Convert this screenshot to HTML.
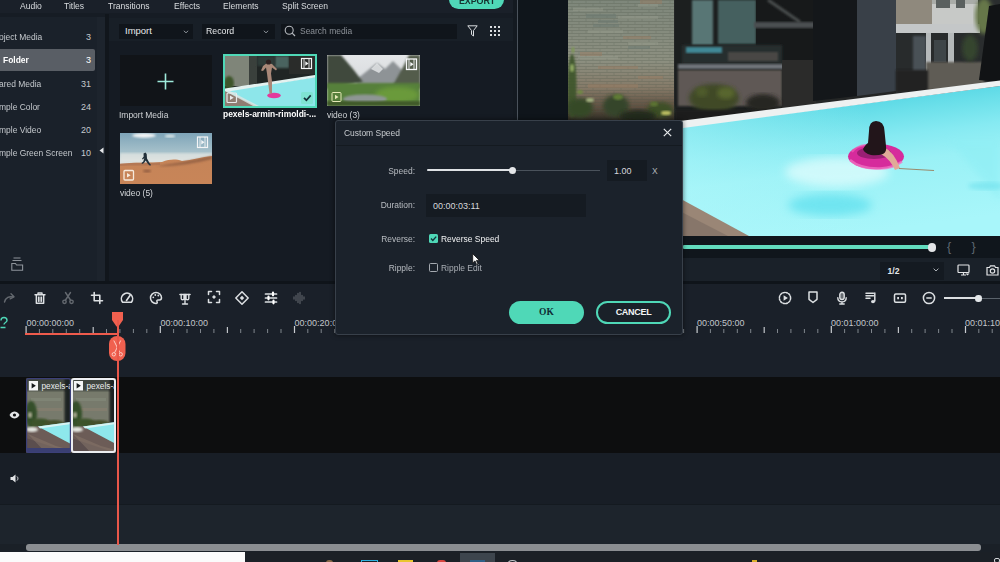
<!DOCTYPE html>
<html><head><meta charset="utf-8">
<style>
*{box-sizing:border-box;margin:0;padding:0}
html,body{width:1000px;height:562px;overflow:hidden;background:#1a2029;font-family:"Liberation Sans",sans-serif;color:#c9cdd1}
.a{position:absolute}
.t{position:absolute;white-space:nowrap;font-size:9px;line-height:10px;color:#c5c9cd}
.ic{position:absolute;overflow:visible}
.n{transform:scaleX(.94);transform-origin:0 50%}
.nr{transform:scaleX(.94);transform-origin:100% 50%}
.tab{font-size:9.5px!important;color:#d9dcdf!important;transform:scaleX(.9);transform-origin:0 50%;top:.5px!important}
</style></head><body>
<!-- ===== top tabs ===== -->
<div class="a" style="left:0;top:0;width:516px;height:13px;background:#1a2029"></div><div class="a" style="left:0;top:13px;width:516px;height:5px;background:#161c24"></div>
<div class="t tab" style="left:20px">Audio</div>
<div class="t tab" style="left:64px">Titles</div>
<div class="t tab" style="left:108px">Transitions</div>
<div class="t tab" style="left:174px">Effects</div>
<div class="t tab" style="left:223px">Elements</div>
<div class="t tab" style="left:282px">Split Screen</div>
<div class="a" style="left:449px;top:-10px;width:54.500px;height:19px;border-radius:10px;background:#4fd8b7"></div>
<div class="t n" style="left:459px;top:-4.500px;font-size:9.500px;font-weight:bold;color:#16322f;letter-spacing:-.1px">EXPORT</div>

<!-- ===== sidebar ===== -->
<div class="a" style="left:0;top:17px;width:105px;height:265px;background:#1a212a"></div><div class="a" style="left:97px;top:17px;width:7.500px;height:265px;background:#1d242d"></div>
<div class="a" style="left:0;top:49px;width:95px;height:22px;background:#595e65;border-radius:0 2px 2px 0"></div>
<div class="t n" style="left:-1.5px;top:32px">oject Media</div><div class="t" style="left:86px;top:32px">3</div>
<div class="t n" style="left:3px;top:55px;font-weight:bold;color:#fff">Folder</div><div class="t" style="left:86px;top:55px;color:#fff">3</div>
<div class="t n" style="left:-1.5px;top:78.5px">ared Media</div><div class="t" style="left:81px;top:78.5px">31</div>
<div class="t n" style="left:-1.5px;top:101.5px">mple Color</div><div class="t" style="left:81px;top:101.5px">24</div>
<div class="t n" style="left:-1.5px;top:124.5px">mple Video</div><div class="t" style="left:81px;top:124.5px">20</div>
<div class="t n" style="left:-1.5px;top:148px">mple Green Screen</div><div class="t" style="left:81px;top:148px">10</div>
<div class="a" style="left:104.500px;top:14px;width:4px;height:268px;background:#11161c"></div>

<!-- ===== media panel ===== -->
<div class="a" style="left:108.500px;top:18px;width:407.500px;height:23px;background:#181f27"></div><div class="a" style="left:108.500px;top:41px;width:407.500px;height:241px;background:#151b23"></div>
<div class="a" style="left:119px;top:23.5px;width:74px;height:15.5px;background:#10151b"></div>
<div class="t n" style="left:125px;top:26px;font-size:9.500px;color:#e6e8ea;transform:none">Import</div>
<div class="a" style="left:202px;top:23.5px;width:73px;height:15.5px;background:#10151b"></div>
<div class="t n" style="left:206px;top:26px;font-size:9.300px;color:#e6e8ea">Record</div>
<div class="a" style="left:281px;top:23.5px;width:175.500px;height:15.5px;background:#10151b"></div>
<div class="t n" style="left:300px;top:26px;color:#8b9097">Search media</div>

<div class="a" style="left:119.500px;top:55px;width:92.500px;height:51px;background:#111418"></div>
<div class="t n" style="left:119px;top:110px;color:#d0d3d6">Import Media</div>
<div class="t n" style="left:223px;top:109px;font-weight:bold;color:#fff">pexels-armin-rimoldi-...</div>
<div class="t n" style="left:327px;top:109.500px;color:#d5d8db">video (3)</div>
<div class="t n" style="left:120px;top:187.500px;color:#d5d8db">video (5)</div>

<!-- thumbs -->
<svg class="ic" style="left:157px;top:73px" width="17" height="17" viewBox="0 0 17 17"><path d="M8.500 .5v16M.5 8.500h16" stroke="#9feadb" stroke-width="1.600"/></svg>
<svg class="a" style="left:223px;top:54px" width="94" height="54" viewBox="0 0 94 54">
<rect width="94" height="54" fill="#4fd8b7"/>
<g transform="translate(2,2)"><svg width="90" height="50" viewBox="0 0 90 50">
<rect width="90" height="50" fill="#202524"/>
<rect x="0" y="0" width="24" height="30" fill="#7f8579"/>
<rect x="24" y="0" width="8" height="28" fill="#3a403c"/>
<rect x="50" y="0" width="14" height="12" fill="#48645f" filter="url(#b1)"/>
<rect x="32" y="0" width="18" height="10" fill="#2f3a38" filter="url(#b1)"/>
<rect x="64" y="0" width="26" height="18" fill="#2a2c2a"/>
<ellipse cx="4" cy="27" rx="5" ry="7" fill="#3e552c" filter="url(#b1)"/>
<polygon points="0,35 90,21 90,50 0,50" fill="#8de6ea"/>
<polygon points="0,32.500 90,19 90,21.500 0,36" fill="#e4f2f0"/>
<polygon points="0,35 31,50 0,50" fill="#8f7d72"/>
<polygon points="0,35 4,34.500 34,50 28,50" fill="#dfe6e4" opacity=".8"/>
<ellipse cx="49" cy="39.500" rx="6.800" ry="2.800" fill="#e43a9c"/>
<path d="M38 10l4-3 5 1 5 5-1 1.500-4-3-1 6 1 8 0 12h-2.500l-1.500-12-1-8-1-6-3 3.500-2-.5z" fill="#a98878"/>
<ellipse cx="43.500" cy="6" rx="2.600" ry="2.600" fill="#2c2020"/>
</svg></g>
<g fill="none" stroke="#f4f5f6" stroke-width="1.200"><rect x="78.500" y="4.500" width="10" height="10"/><path d="M81 4.500v10M86 4.500v10" stroke-width=".9"/></g><path d="M82.300 7.300v4.400l3.200-2.200z" fill="#f4f5f6"/>
<g fill="none" stroke="#e8eaeb" stroke-width="1.200"><rect x="4" y="39" width="9.500" height="9.500" rx="1"/></g><path d="M7 41.500v4.600l3.700-2.300z" fill="#e8eaeb"/>
<rect x="78" y="38" width="12" height="12" rx="1.500" fill="#7fe3d3"/><path d="M81 43.800l2.400 2.400 4.300-4.800" stroke="#14323a" stroke-width="1.700" fill="none"/>
</svg>
<svg class="a" style="left:327px;top:55px" width="93" height="51" viewBox="0 0 93 51">
<defs><linearGradient id="sky3" x1="0" y1="0" x2="0" y2="1"><stop offset="0" stop-color="#e4e6e8"/><stop offset="1" stop-color="#cfd3d6"/></linearGradient></defs>
<rect width="93" height="51" fill="url(#sky3)"/>
<polygon points="30,24 50,8 58,14 66,6 80,20 93,14 93,32 30,32" fill="#8e9396" filter="url(#b1)"/>
<polygon points="44,14 50,8 56,14 52,18" fill="#e6e8ea" opacity=".8"/>
<polygon points="0,0 14,0 26,14 36,27 0,34" fill="#3f4a3c" filter="url(#b1)"/>
<polygon points="93,0 82,0 76,12 66,30 93,34" fill="#535c4c" filter="url(#b1)"/>
<rect x="0" y="28" width="93" height="23" fill="#56803a" filter="url(#b1)"/>
<ellipse cx="70" cy="40" rx="22" ry="8" fill="#6a9a3a" filter="url(#b2)"/>
<ellipse cx="38" cy="44" rx="22" ry="4.500" fill="#8e9694" filter="url(#b1)"/>
<rect x="0" y="46" width="93" height="5" fill="#3f5a2c" filter="url(#b1)"/>
<g fill="none" stroke="#f8f9fa" stroke-width="1.300"><rect x="79.500" y="4" width="10" height="10.500"/><path d="M82 4v10.500M87 4v10.500" stroke-width=".9"/></g><path d="M83.300 7v4.400l3.200-2.200z" fill="#f8f9fa"/>
<g fill="none" stroke="#e6e9b8" stroke-width="1"><rect x="5" y="37.500" width="9" height="9" rx="1"/></g><path d="M8 39.800v4.400l3.500-2.200z" fill="#e6e9b8"/>
</svg>
<svg class="a" style="left:120px;top:133px" width="92" height="51" viewBox="0 0 92 51">
<defs><linearGradient id="sky5" x1="0" y1="0" x2="0" y2="1"><stop offset="0" stop-color="#7ea4b8"/><stop offset=".4" stop-color="#a9c3cc"/><stop offset=".6" stop-color="#dfe3e0"/><stop offset="1" stop-color="#e0dcd0"/></linearGradient>
<linearGradient id="sand" x1="0" y1="0" x2="0" y2="1"><stop offset="0" stop-color="#c58458"/><stop offset="1" stop-color="#c88558"/></linearGradient></defs>
<rect width="92" height="51" fill="url(#sky5)"/>
<ellipse cx="24" cy="2.500" rx="12" ry="2.200" fill="#f4f6f6" filter="url(#b1)"/>
<ellipse cx="50" cy="3" rx="5" ry="1.500" fill="#d8e4e6" filter="url(#b1)"/>
<rect x="0" y="20" width="92" height="9" fill="#e6e8e4" opacity=".7" filter="url(#b1)"/>
<path d="M0 31 C15 29 30 30 42 29 C50 26 56 26 62 28 C72 27 82 24 92 23 V51 H0z" fill="url(#sand)"/>
<path d="M36 33 C52 31 70 28 92 23 V26 C75 30 55 34 36 33z" fill="#8a5a40" opacity=".8" filter="url(#b1)"/>
<path d="M0 30.500 C12 29 25 30 40 29.500 L40 32 C25 33 12 32 0 33z" fill="#a97052" opacity=".6"/>
<path d="M23.500 20.500l2-1 1.200 1.500.3 4.500 2.500 4.500 1.500 2-1 .8-2-1.800-2.300-3.500-1.700 2.500-2 1-.5-1 1.800-1.500 1-3.500-1.500 1.500-.8-.7 1.700-2.200z" fill="#22303a"/>
<ellipse cx="27" cy="38" rx="4" ry="1.300" fill="#6a4030" opacity=".6" filter="url(#b1)"/>
<g fill="none" stroke="#f4f5f6" stroke-width="1.200"><rect x="77.500" y="4" width="10" height="10.500"/><path d="M80 4v10.500M85 4v10.500" stroke-width=".9"/></g><path d="M81.300 7v4.400l3.200-2.200z" fill="#f4f5f6"/>
<g fill="none" stroke="#f6eadc" stroke-width="1.300"><rect x="4" y="37.500" width="9.500" height="9.500" rx="1"/></g><path d="M7 40v4.600l3.700-2.300z" fill="#f6eadc"/>
</svg>
<!-- media toolbar icons -->
<svg class="ic" style="left:183px;top:29.500px" width="6" height="4" viewBox="0 0 6 4"><path d="M.8 .8L3 2.800 5.200 .8" stroke="#8a9097" stroke-width="1" fill="none"/></svg>
<svg class="ic" style="left:263px;top:29.500px" width="6" height="4" viewBox="0 0 6 4"><path d="M.8 .8L3 2.800 5.200 .8" stroke="#8a9097" stroke-width="1" fill="none"/></svg>
<svg class="ic" style="left:284px;top:25px" width="12" height="12" viewBox="0 0 12 12"><circle cx="5.200" cy="5.200" r="4" stroke="#b5b9be" stroke-width="1.100" fill="none"/><path d="M8.200 8.200L11 11" stroke="#b5b9be" stroke-width="1.200"/></svg>
<svg class="ic" style="left:467px;top:25px" width="11" height="12" viewBox="0 0 11 12"><path d="M.8 .8h9.400L6.500 5.500V11L4.500 9.500V5.500z" stroke="#d9dcdf" stroke-width="1" fill="none" stroke-linejoin="round"/></svg>
<svg class="ic" style="left:490px;top:26px" width="10" height="10" viewBox="0 0 10 10" fill="#d9dcdf"><rect x="0" y="0" width="2" height="2"/><rect x="4" y="0" width="2" height="2"/><rect x="8" y="0" width="2" height="2"/><rect x="0" y="4" width="2" height="2"/><rect x="4" y="4" width="2" height="2"/><rect x="8" y="4" width="2" height="2"/><rect x="0" y="8" width="2" height="2"/><rect x="4" y="8" width="2" height="2"/><rect x="8" y="8" width="2" height="2"/></svg>
<svg class="ic" style="left:98.500px;top:147px" width="5" height="7" viewBox="0 0 5 7"><path d="M4.500 .5v6L.5 3.500z" fill="#e6e8ea"/></svg>
<svg class="ic" style="left:11px;top:257px" width="13" height="14" viewBox="0 0 13 14"><path d="M.8 6.500h3.600l1.200 1.500h6v5.200H.8zM1.500 3.500h9M2.500 1h7" stroke="#8d939a" stroke-width="1.100" fill="none"/></svg>
<!-- panel divider & preview -->
<div class="a" style="left:513px;top:0;width:4px;height:282px;background:#141a21"></div><div class="a" style="left:516.500px;top:0;width:1.500px;height:282px;background:#4a525b"></div>
<div class="a" style="left:518px;top:0;width:50px;height:282px;background:#0f151b"></div>
<svg class="a" style="left:568px;top:0" width="432" height="236" viewBox="0 0 432 236">
<defs>
<linearGradient id="wall" x1="0" y1="0" x2="0" y2="1"><stop offset="0" stop-color="#7e877b"/><stop offset=".5" stop-color="#8c8f80"/><stop offset=".72" stop-color="#857a68"/><stop offset=".88" stop-color="#5e4f40"/><stop offset="1" stop-color="#2a2a22"/></linearGradient>
<linearGradient id="pool" gradientUnits="userSpaceOnUse" x1="266" y1="104" x2="283" y2="234"><stop offset="0" stop-color="#5ad8e5"/><stop offset=".12" stop-color="#6ce0ea"/><stop offset=".3" stop-color="#86eaf2"/><stop offset=".5" stop-color="#9af1f6"/><stop offset="1" stop-color="#a8f6fa"/></linearGradient><linearGradient id="pooll" gradientUnits="userSpaceOnUse" x1="100" y1="0" x2="300" y2="0"><stop offset="0" stop-color="#b2f8fb" stop-opacity=".6"/><stop offset="1" stop-color="#b2f8fb" stop-opacity="0"/></linearGradient>
<filter id="b2"><feGaussianBlur stdDeviation="2"/></filter>
<filter id="b3"><feGaussianBlur stdDeviation="3"/></filter>
<filter id="b4"><feGaussianBlur stdDeviation="5"/></filter>
<filter id="b1"><feGaussianBlur stdDeviation="0.8"/></filter>
<pattern id="brick" width="14" height="6" patternUnits="userSpaceOnUse"><rect width="14" height="6" fill="none"/><path d="M0 .5H14M0 3.500H14" stroke="#4e5648" stroke-width=".7"/><path d="M4 .5V3.500M11 3.500V6" stroke="#4e5648" stroke-width=".6"/></pattern>
<clipPath id="pv"><rect width="432" height="236"/></clipPath>
</defs>
<g clip-path="url(#pv)">
<rect width="432" height="236" fill="#242626"/>
<!-- mid background building -->
<rect x="107" y="0" width="140" height="122" fill="#1c1f1f"/>
<rect x="124" y="0" width="21" height="45" fill="#587674" filter="url(#b1)"/>
<rect x="150" y="0" width="38" height="44" fill="#45605e" filter="url(#b1)"/>
<rect x="188" y="0" width="60" height="60" fill="#17191a"/>
<path d="M200 0L232 22" stroke="#4a4e4e" stroke-width="3" filter="url(#b1)"/>
<rect x="186" y="22" width="62" height="6" fill="#4c5051" filter="url(#b1)"/>
<rect x="114" y="45" width="100" height="19" fill="#272d2e" filter="url(#b1)"/>
<rect x="118" y="47" width="36" height="6" fill="#3f8896" filter="url(#b1)"/>
<rect x="160" y="52" width="50" height="9" fill="#4a4644" filter="url(#b1)"/>
<path d="M110 64h104c4 0 6 2 5 5H110z" fill="#70757a" filter="url(#b1)"/>
<rect x="110" y="70" width="104" height="36" fill="#5e5954" filter="url(#b1)"/>
<rect x="214" y="60" width="34" height="48" fill="#2b2b2a"/>
<ellipse cx="146" cy="98" rx="25" ry="14" fill="#3f4927" filter="url(#b2)"/>
<ellipse cx="158" cy="93" rx="9" ry="6" fill="#59662f" filter="url(#b2)"/>
<ellipse cx="134" cy="92" rx="6" ry="5" fill="#4f5c2c" filter="url(#b2)"/>
<ellipse cx="195" cy="103" rx="17" ry="9" fill="#272624" filter="url(#b2)"/>
<rect x="107" y="110" width="140" height="14" fill="#1b1c1b" filter="url(#b1)"/>
<!-- brick wall -->
<rect x="0" y="0" width="106" height="122" fill="url(#wall)"/>
<rect x="0" y="0" width="106" height="112" fill="url(#brick)" opacity=".38"/>
<g fill="#9a9f90" opacity=".4"><rect x="5" y="8" width="30" height="3"/><rect x="50" y="16" width="40" height="3"/><rect x="20" y="30" width="35" height="3"/><rect x="60" y="42" width="30" height="3"/><rect x="10" y="56" width="40" height="3"/><rect x="70" y="4" width="20" height="3"/></g>
<g fill="#6c7a72" opacity=".5"><rect x="18" y="14" width="30" height="4"/><rect x="60" y="46" width="22" height="3"/><rect x="25" y="24" width="26" height="3"/><rect x="30" y="20" width="20" height="3"/></g>
<g fill="#9a7c62" opacity=".45"><rect x="55" y="36" width="28" height="3"/><rect x="12" y="52" width="22" height="4"/><rect x="30" y="66" width="40" height="3"/><rect x="70" y="76" width="25" height="3"/><rect x="20" y="84" width="50" height="4"/><rect x="72" y="0" width="22" height="4"/></g>
<ellipse cx="4" cy="86" rx="4.500" ry="32" fill="#3c552b" opacity=".9" filter="url(#b1)"/>
<ellipse cx="12" cy="108" rx="13" ry="10" fill="#364a28" filter="url(#b2)"/>
<ellipse cx="48" cy="106" rx="13" ry="11" fill="#34452a" filter="url(#b2)"/>
<ellipse cx="92" cy="110" rx="13" ry="8" fill="#3e4f27" filter="url(#b2)"/>
<ellipse cx="70" cy="116" rx="18" ry="6" fill="#232a1c" filter="url(#b2)"/>
<ellipse cx="4" cy="68" rx="2" ry="4" fill="#8fa862" filter="url(#b1)"/>
<ellipse cx="5" cy="50" rx="1.500" ry="3" fill="#7f9a58" filter="url(#b1)"/>
<ellipse cx="22" cy="100" rx="4" ry="2" fill="#a3b380" filter="url(#b1)"/>
<ellipse cx="12" cy="92" rx="3" ry="2" fill="#6f8a42" filter="url(#b1)"/>
<ellipse cx="98" cy="113" rx="5" ry="2.200" fill="#bcbd62" filter="url(#b1)"/>
<ellipse cx="50" cy="97" rx="5" ry="3" fill="#5f7a36" filter="url(#b1)"/>
<ellipse cx="86" cy="104" rx="4" ry="2.500" fill="#5c7333" filter="url(#b1)"/>
<!-- dark column -->
<polygon points="245,0 289,0 289,96 245,101" fill="#14171a"/>
<polygon points="289,0 328,0 328,91 289,96" fill="#394048"/>
<!-- right building -->
<rect x="328" y="0" width="104" height="95" fill="#2a2d2e"/>
<rect x="328" y="0" width="40" height="25" fill="#8f897d"/>
<rect x="364" y="3" width="46" height="22" fill="#c7c9c7"/>
<rect x="364" y="0" width="46" height="4" fill="#a9aca8"/>
<rect x="368" y="0" width="14" height="8" fill="#5a605f"/><rect x="388" y="0" width="9" height="8" fill="#5a605f"/>
<rect x="328" y="24" width="84" height="9" fill="#c4c7c8"/>
<rect x="328" y="33" width="84" height="50" fill="#282b2c"/>
<rect x="345" y="36" width="13" height="36" fill="#485157" filter="url(#b1)"/>
<rect x="358" y="33" width="5" height="38" fill="#b5b9ba"/><rect x="380" y="33" width="6" height="32" fill="#b5b9ba"/>
<rect x="366" y="40" width="12" height="22" fill="#3e4548"/>
<rect x="358" y="62" width="58" height="28" fill="#5e5b55" filter="url(#b1)"/>
<rect x="328" y="70" width="32" height="22" fill="#232424" filter="url(#b1)"/>
<ellipse cx="416" cy="16" rx="9" ry="18" fill="#66774a" filter="url(#b2)"/>
<ellipse cx="402" cy="48" rx="8" ry="13" fill="#36452e" filter="url(#b2)"/>
<polygon points="421,6 432,4 432,82 411,80" fill="#111315"/>
<!-- pool -->
<polygon points="100,129 432,86 432,236 100,236" fill="url(#pool)"/>
<polygon points="100,129 432,86 432,236 100,236" fill="url(#pooll)"/>
<polygon points="380,140 432,140 432,200" fill="#8eeef4" opacity=".6" filter="url(#b3)"/>
<ellipse cx="269" cy="172" rx="52" ry="15" fill="#e4fdfd" opacity=".7" filter="url(#b4)"/>
<ellipse cx="262" cy="205" rx="42" ry="11" fill="#5fe0ee" opacity=".75" filter="url(#b4)"/>
<ellipse cx="418" cy="186" rx="18" ry="4" fill="#74e3ee" opacity=".7" filter="url(#b2)"/>
<polygon points="100,122.500 432,80.500 432,86 100,130" fill="#eef1f1"/>
<!-- deck -->
<polygon points="100,192 181,236 100,236" fill="#9a8676"/>
<polygon points="100,205 160,236 100,236" fill="#7c6c62" opacity=".6"/>
<!-- person -->
<ellipse cx="308" cy="156.500" rx="28" ry="12.700" fill="#d62b9c"/>
<ellipse cx="306" cy="153" rx="17" ry="6" fill="#9a1f74"/>
<path d="M282 160 q10 9 30 8.500 q14 -.5 22 -7" stroke="#f274c4" stroke-width="2.500" fill="none" opacity=".75"/>
<path d="M284 152 q4 -6 14 -7" stroke="#ee60b8" stroke-width="2" fill="none" opacity=".7"/>
<path d="M316 147 q10 5 16 21 l-5 2 q-5 -11 -14 -16z" fill="#e0aa98"/>
<path d="M301 131 q0 -10 7 -10 q8 0 8.500 10 l1.500 15 q1 6 -3 8 q-6 2 -12 1 q-7 -2 -8 -6 q3 -5 5 -6z" fill="#22151a"/>
<path d="M331 168.500 L366 170.500" stroke="#9a8a6c" stroke-width="1.100"/>
</g>
</svg>
<div class="a" style="left:568px;top:236px;width:432px;height:46px;background:#1a2129"></div>
<!-- preview controls -->
<div class="a" style="left:568px;top:235.500px;width:432px;height:22.500px;background:#10161c"></div>
<div class="a" style="left:683px;top:245px;width:249px;height:4px;background:#62dcbe;border-radius:1px"></div>
<div class="a" style="left:927.800px;top:243.200px;width:8.600px;height:8.600px;border-radius:50%;background:#e3e5e7"></div>
<div class="t" style="left:947px;top:241px;font-size:12.500px;line-height:13px;color:#5f6872">{</div>
<div class="t" style="left:971.500px;top:241px;font-size:12.500px;line-height:13px;color:#5f6872">}</div>
<div class="a" style="left:880px;top:262px;width:64px;height:18px;background:#141a21"></div>
<div class="t" style="left:887.500px;top:266px;font-size:8.600px;font-weight:bold;color:#e4e6e8">1/2</div>
<svg class="ic" style="left:933px;top:268px" width="6" height="4" viewBox="0 0 6 4"><path d="M.6 .6L3 3 5.400 .6" stroke="#a9aeb4" stroke-width="1" fill="none"/></svg>
<svg class="ic" style="left:957px;top:264px" width="13" height="12" viewBox="0 0 13 12"><rect x="1" y="1" width="11" height="7.500" rx=".8" stroke="#e3e5e7" stroke-width="1.200" fill="none"/><path d="M4 11h5M6.500 8.500v2.500" stroke="#e3e5e7" stroke-width="1.200"/><path d="M8.500 9.500l2 2 2-2z" fill="#e3e5e7"/></svg>
<svg class="ic" style="left:986px;top:264px" width="13" height="12" viewBox="0 0 13 12"><path d="M1 3.500h2.500l1-1.700h4l1 1.700H12v7.500H1z" stroke="#e3e5e7" stroke-width="1.200" fill="none"/><circle cx="6.500" cy="7" r="2.200" stroke="#e3e5e7" stroke-width="1.200" fill="none"/></svg>

<!-- ===== separator + toolbar ===== -->
<div class="a" style="left:0;top:281px;width:1000px;height:3px;background:#0f141a"></div>
<div class="a" style="left:0;top:284px;width:1000px;height:28px;background:#1a2029"></div>

<!-- ===== timeline ===== -->
<div class="a" style="left:0;top:312px;width:1000px;height:65px;background:#1a2029"></div>
<div class="a" style="left:0;top:377px;width:1000px;height:76px;background:#0d0e0f"></div>
<div class="a" style="left:0;top:453px;width:1000px;height:51px;background:#181e26"></div>
<div class="a" style="left:0;top:504px;width:1000px;height:1.5px;background:#141a20"></div>
<div class="a" style="left:0;top:505px;width:1000px;height:39px;background:#1d242c"></div>
<div class="a" style="left:0;top:544px;width:1000px;height:8px;background:#1a2027"></div>
<div class="a" style="left:26px;top:544px;width:955px;height:7px;border-radius:3px;background:#8b8e92"></div>
<div class="a" style="left:0;top:552px;width:1000px;height:10px;background:#1b2026"></div>
<div class="a" style="left:0;top:552px;width:245px;height:10px;background:#fbfbfb"></div>
<div class="a" style="left:459.500px;top:552.500px;width:35px;height:10px;background:#3d454d"></div>
<div class="a" style="left:361px;top:559.500px;width:16.500px;height:4px;border:1.500px solid #2fb0de"></div>
<div class="a" style="left:398px;top:560px;width:14.500px;height:3px;background:#e9c62f"></div>
<div class="a" style="left:437px;top:560px;width:9px;height:4px;border-radius:3px 3px 0 0;background:#d8453f"></div>
<div class="a" style="left:326px;top:560px;width:7px;height:4px;border-radius:3px 3px 0 0;background:#8a6a4a"></div>
<div class="a" style="left:470px;top:560px;width:15px;height:3px;background:#2f5f86"></div>
<div class="a" style="left:508px;top:559.500px;width:9px;height:6px;border-radius:50%;border:1.500px solid #c5c9cd"></div>
<div class="a" style="left:752px;top:560px;width:5px;height:3px;background:#d9b02c"></div>
<div class="a" style="left:994px;top:558px;width:6px;height:5px;border:1.200px solid #d5d8db;border-radius:2px"></div>


<!-- toolbar icons -->
<svg class="ic" style="left:3.0px;top:291.2px;opacity:0.38" width="14" height="14" viewBox="0 0 14 14" fill="none" stroke="#dcdfe2" stroke-width="1.4" stroke-linecap="round" stroke-linejoin="round"><path d="M1.500 11c1-4.500 5-6 8.500-5M8 2.800l3 3-3.800 2"/></svg>
<svg class="ic" style="left:33.0px;top:290.7px;opacity:1" width="14" height="14" viewBox="0 0 14 14" fill="none" stroke="#dcdfe2" stroke-width="1.4" stroke-linecap="round" stroke-linejoin="round"><path d="M2 3.800h10M5 3.500V2h4v1.500M3.300 4v8.300h7.400V4M5.700 6.200v4M8.300 6.200v4" /><rect x="4.500" y="5.500" width="5" height="5.500" fill="#dcdfe2" opacity=".35" stroke="none"/></svg>
<svg class="ic" style="left:61.0px;top:290.7px;opacity:0.38" width="14" height="14" viewBox="0 0 14 14" fill="none" stroke="#dcdfe2" stroke-width="1.4" stroke-linecap="round" stroke-linejoin="round"><path d="M4.500 1.500L9.800 9.500M9.500 1.500L4.200 9.500"/><circle cx="3.500" cy="10.800" r="1.700"/><circle cx="10.500" cy="10.800" r="1.700"/></svg>
<svg class="ic" style="left:90.0px;top:290.7px;opacity:1" width="14" height="14" viewBox="0 0 14 14" fill="none" stroke="#dcdfe2" stroke-width="1.4" stroke-linecap="round" stroke-linejoin="round"><path d="M4.200 1.500v8.300h8.300M1.500 4.200h8.300v8.300" stroke-width="1.600"/></svg>
<svg class="ic" style="left:119.5px;top:291.3px;opacity:1" width="14" height="14" viewBox="0 0 14 14" fill="none" stroke="#dcdfe2" stroke-width="1.4" stroke-linecap="round" stroke-linejoin="round"><path d="M2.600 11.200a5.600 5.600 0 1 1 8.800 0z" stroke-width="1.600"/><path d="M6.500 9.500l3.500-5" stroke-width="1.600"/></svg>
<svg class="ic" style="left:148.7px;top:290.7px;opacity:1" width="14" height="14" viewBox="0 0 14 14" fill="none" stroke="#dcdfe2" stroke-width="1.4" stroke-linecap="round" stroke-linejoin="round"><path d="M7 1.500a5.500 5.500 0 1 0 0 11c1.500 0 1.400-1.200 1-1.900-.5-.9.200-1.700 1-1.700h1.500c1.100 0 2-.8 2-2.100C12.500 3.800 10 1.500 7 1.500z" stroke-width="1.500"/><circle cx="4.300" cy="6.300" r=".9" fill="#dcdfe2" stroke="none"/><circle cx="6.300" cy="4" r=".9" fill="#dcdfe2" stroke="none"/><circle cx="9.300" cy="4.500" r=".9" fill="#dcdfe2" stroke="none"/></svg>
<svg class="ic" style="left:177.5px;top:291.5px;opacity:1" width="14" height="14" viewBox="0 0 14 14" fill="none" stroke="#dcdfe2" stroke-width="1.4" stroke-linecap="round" stroke-linejoin="round"><path d="M2 2.500h10" stroke-width="1.600"/><path d="M3.200 2.500v4c0 1.600 2.800 1.600 2.800 0v-4M8 2.500v4c0 1.600 2.800 1.600 2.800 0v-4M7 2.500v9M4.500 12h5"/></svg>
<svg class="ic" style="left:206.6px;top:290.2px;opacity:1" width="14" height="14" viewBox="0 0 14 14" fill="none" stroke="#dcdfe2" stroke-width="1.4" stroke-linecap="round" stroke-linejoin="round"><path d="M1.500 4.500v-3h3M9.500 1.500h3v3M12.500 9.500v3h-3M4.500 12.500h-3v-3" stroke-width="1.500"/><path d="M7 5l2 2-2 2-2-2z" fill="#dcdfe2" stroke="none"/></svg>
<svg class="ic" style="left:235.2px;top:291.0px;opacity:1" width="14" height="14" viewBox="0 0 14 14" fill="none" stroke="#dcdfe2" stroke-width="1.4" stroke-linecap="round" stroke-linejoin="round"><path d="M7 .8l6.200 6.200L7 13.200.8 7z" stroke-width="1.500"/><path d="M7 4.800L9.200 7 7 9.200 4.800 7z" fill="#dcdfe2" stroke="none"/></svg>
<svg class="ic" style="left:264.0px;top:290.7px;opacity:1" width="14" height="14" viewBox="0 0 14 14" fill="none" stroke="#dcdfe2" stroke-width="1.4" stroke-linecap="round" stroke-linejoin="round"><path d="M1.500 3h11M1.500 7h11M1.500 11h11" stroke-width="1.700"/><path d="M9 1.700v2.600M4.500 5.700v2.600M9.500 9.700v2.600" stroke-width="2.200" stroke="#fff"/></svg>
<svg class="ic" style="left:292.0px;top:290.7px;opacity:0.25" width="14" height="14" viewBox="0 0 14 14" fill="none" stroke="#dcdfe2" stroke-width="1.4" stroke-linecap="round" stroke-linejoin="round"><path d="M2 6v2M4 4.500v5M6 2.500v9M8 1.500v11M10 4.500v5M12 6v2" stroke-width="1.600"/></svg>
<svg class="ic" style="left:777.7px;top:290.7px;opacity:1" width="14" height="14" viewBox="0 0 14 14" fill="none" stroke="#dcdfe2" stroke-width="1.4" stroke-linecap="round" stroke-linejoin="round"><circle cx="7" cy="7" r="5.600" stroke-dasharray="1.700 1.250" stroke-width="1.500"/><path d="M5.600 4.300v5.400l4.300-2.700z" fill="#dcdfe2" stroke="none"/></svg>
<svg class="ic" style="left:806.3px;top:290.2px;opacity:1" width="14" height="14" viewBox="0 0 14 14" fill="none" stroke="#dcdfe2" stroke-width="1.4" stroke-linecap="round" stroke-linejoin="round"><path d="M3 2h8v7.300l-4 3.200-4-3.200z" stroke-width="1.500"/></svg>
<svg class="ic" style="left:835.3px;top:290.7px;opacity:1" width="14" height="14" viewBox="0 0 14 14" fill="none" stroke="#dcdfe2" stroke-width="1.4" stroke-linecap="round" stroke-linejoin="round"><rect x="4.800" y="1.300" width="4.400" height="7.200" rx="2.200" fill="#dcdfe2" fill-opacity=".4"/><path d="M2.800 6.800c0 5.400 8.400 5.400 8.400 0M7 11v2M4.800 13h4.400"/></svg>
<svg class="ic" style="left:864.0px;top:290.7px;opacity:1" width="14" height="14" viewBox="0 0 14 14" fill="none" stroke="#dcdfe2" stroke-width="1.4" stroke-linecap="round" stroke-linejoin="round"><path d="M2 2.300h7.500M2 4.800h7.500M2 7.300h4" stroke-width="1.500"/><path d="M10.800 2v8" stroke-width="1.500"/><ellipse cx="9" cy="10.600" rx="2" ry="1.700" fill="#dcdfe2" stroke="none"/></svg>
<svg class="ic" style="left:893.0px;top:290.7px;opacity:1" width="14" height="14" viewBox="0 0 14 14" fill="none" stroke="#dcdfe2" stroke-width="1.4" stroke-linecap="round" stroke-linejoin="round"><rect x="1.500" y="3" width="11" height="8.200" rx="1.200" stroke-width="1.500"/><path d="M4.200 7.100h1.800M8 7.100h1.800" stroke-width="2.200" stroke-linecap="butt"/></svg>
<svg class="ic" style="left:921.7px;top:290.7px;opacity:1" width="14" height="14" viewBox="0 0 14 14" fill="none" stroke="#dcdfe2" stroke-width="1.4" stroke-linecap="round" stroke-linejoin="round"><circle cx="7" cy="7" r="5.600" stroke-width="1.500"/><path d="M4.800 7h4.400" stroke-width="1.500"/></svg>
<div class="a" style="left:944px;top:297px;width:34px;height:2px;background:#dcdfe2"></div>
<div class="a" style="left:978px;top:297.500px;width:22px;height:1px;background:#5a626b"></div>
<div class="a" style="left:975px;top:295px;width:6.500px;height:6.500px;border-radius:50%;background:#e4e7ea"></div>
<!-- ruler -->
<div class="t" style="left:26.4px;top:318px;color:#c2c6ca">00:00:00:00</div>
<div class="t" style="left:160.5px;top:318px;color:#c2c6ca">00:00:10:00</div>
<div class="t" style="left:294.6px;top:318px;color:#c2c6ca">00:00:20:00</div>
<div class="t" style="left:428.7px;top:318px;color:#c2c6ca">00:00:30:00</div>
<div class="t" style="left:562.8px;top:318px;color:#c2c6ca">00:00:40:00</div>
<div class="t" style="left:696.9px;top:318px;color:#c2c6ca">00:00:50:00</div>
<div class="t" style="left:831.0px;top:318px;color:#c2c6ca">00:01:00:00</div>
<div class="t" style="left:965.1px;top:318px;color:#c2c6ca">00:01:10:00</div>
<svg class="a" style="left:0;top:312px" width="1000" height="22" viewBox="0 0 1000 22"><rect x="25.5" y="14" width="1.200" height="7" fill="#c9cdd1"/><rect x="38.9" y="17" width="1" height="4" fill="#7f858c"/><rect x="52.3" y="17" width="1" height="4" fill="#7f858c"/><rect x="65.8" y="17" width="1" height="4" fill="#7f858c"/><rect x="79.2" y="17" width="1" height="4" fill="#7f858c"/><rect x="92.6" y="15" width="1.200" height="6" fill="#c0c4c8"/><rect x="106.0" y="17" width="1" height="4" fill="#7f858c"/><rect x="119.4" y="17" width="1" height="4" fill="#7f858c"/><rect x="132.9" y="17" width="1" height="4" fill="#7f858c"/><rect x="146.3" y="17" width="1" height="4" fill="#7f858c"/><rect x="159.7" y="14" width="1.200" height="7" fill="#c9cdd1"/><rect x="173.1" y="17" width="1" height="4" fill="#7f858c"/><rect x="186.5" y="17" width="1" height="4" fill="#7f858c"/><rect x="200.0" y="17" width="1" height="4" fill="#7f858c"/><rect x="213.4" y="17" width="1" height="4" fill="#7f858c"/><rect x="226.8" y="15" width="1.200" height="6" fill="#c0c4c8"/><rect x="240.2" y="17" width="1" height="4" fill="#7f858c"/><rect x="253.6" y="17" width="1" height="4" fill="#7f858c"/><rect x="267.1" y="17" width="1" height="4" fill="#7f858c"/><rect x="280.5" y="17" width="1" height="4" fill="#7f858c"/><rect x="293.9" y="14" width="1.200" height="7" fill="#c9cdd1"/><rect x="307.3" y="17" width="1" height="4" fill="#7f858c"/><rect x="320.7" y="17" width="1" height="4" fill="#7f858c"/><rect x="334.2" y="17" width="1" height="4" fill="#7f858c"/><rect x="347.6" y="17" width="1" height="4" fill="#7f858c"/><rect x="361.0" y="15" width="1.200" height="6" fill="#c0c4c8"/><rect x="374.4" y="17" width="1" height="4" fill="#7f858c"/><rect x="387.8" y="17" width="1" height="4" fill="#7f858c"/><rect x="401.3" y="17" width="1" height="4" fill="#7f858c"/><rect x="414.7" y="17" width="1" height="4" fill="#7f858c"/><rect x="428.1" y="14" width="1.200" height="7" fill="#c9cdd1"/><rect x="441.5" y="17" width="1" height="4" fill="#7f858c"/><rect x="454.9" y="17" width="1" height="4" fill="#7f858c"/><rect x="468.4" y="17" width="1" height="4" fill="#7f858c"/><rect x="481.8" y="17" width="1" height="4" fill="#7f858c"/><rect x="495.2" y="15" width="1.200" height="6" fill="#c0c4c8"/><rect x="508.6" y="17" width="1" height="4" fill="#7f858c"/><rect x="522.0" y="17" width="1" height="4" fill="#7f858c"/><rect x="535.5" y="17" width="1" height="4" fill="#7f858c"/><rect x="548.9" y="17" width="1" height="4" fill="#7f858c"/><rect x="562.3" y="14" width="1.200" height="7" fill="#c9cdd1"/><rect x="575.7" y="17" width="1" height="4" fill="#7f858c"/><rect x="589.1" y="17" width="1" height="4" fill="#7f858c"/><rect x="602.6" y="17" width="1" height="4" fill="#7f858c"/><rect x="616.0" y="17" width="1" height="4" fill="#7f858c"/><rect x="629.4" y="15" width="1.200" height="6" fill="#c0c4c8"/><rect x="642.8" y="17" width="1" height="4" fill="#7f858c"/><rect x="656.2" y="17" width="1" height="4" fill="#7f858c"/><rect x="669.7" y="17" width="1" height="4" fill="#7f858c"/><rect x="683.1" y="17" width="1" height="4" fill="#7f858c"/><rect x="696.5" y="14" width="1.200" height="7" fill="#c9cdd1"/><rect x="709.9" y="17" width="1" height="4" fill="#7f858c"/><rect x="723.3" y="17" width="1" height="4" fill="#7f858c"/><rect x="736.8" y="17" width="1" height="4" fill="#7f858c"/><rect x="750.2" y="17" width="1" height="4" fill="#7f858c"/><rect x="763.6" y="15" width="1.200" height="6" fill="#c0c4c8"/><rect x="777.0" y="17" width="1" height="4" fill="#7f858c"/><rect x="790.4" y="17" width="1" height="4" fill="#7f858c"/><rect x="803.9" y="17" width="1" height="4" fill="#7f858c"/><rect x="817.3" y="17" width="1" height="4" fill="#7f858c"/><rect x="830.7" y="14" width="1.200" height="7" fill="#c9cdd1"/><rect x="844.1" y="17" width="1" height="4" fill="#7f858c"/><rect x="857.5" y="17" width="1" height="4" fill="#7f858c"/><rect x="871.0" y="17" width="1" height="4" fill="#7f858c"/><rect x="884.4" y="17" width="1" height="4" fill="#7f858c"/><rect x="897.8" y="15" width="1.200" height="6" fill="#c0c4c8"/><rect x="911.2" y="17" width="1" height="4" fill="#7f858c"/><rect x="924.6" y="17" width="1" height="4" fill="#7f858c"/><rect x="938.1" y="17" width="1" height="4" fill="#7f858c"/><rect x="951.5" y="17" width="1" height="4" fill="#7f858c"/><rect x="964.9" y="14" width="1.200" height="7" fill="#c9cdd1"/><rect x="978.3" y="17" width="1" height="4" fill="#7f858c"/><rect x="991.7" y="17" width="1" height="4" fill="#7f858c"/><rect x="1005.2" y="17" width="1" height="4" fill="#7f858c"/></svg>
<svg class="ic" style="left:-1.5px;top:317px" width="10" height="12" viewBox="0 0 10 12" fill="none" stroke="#4fd8b7" stroke-width="1.400"><path d="M2 3.500a3 3 0 0 1 6 0c0 2-3 2-3 4M1.500 10.500h5"/></svg>
<svg class="ic" style="left:9px;top:411px" width="11" height="8" viewBox="0 0 11 8"><path d="M.5 4C2 1.300 4 .5 5.500 .5S9 1.300 10.500 4C9 6.700 7 7.500 5.500 7.500S2 6.700 .5 4z" fill="#e3e5e7"/><circle cx="5.500" cy="4" r="1.600" fill="#0d0e0f"/></svg>
<svg class="ic" style="left:10px;top:474px" width="10" height="9" viewBox="0 0 10 9"><path d="M.5 3h2l3-2.500v8l-3-2.500h-2z" fill="#e3e5e7"/><path d="M7 2.500c1.200 1 1.200 3 0 4" stroke="#e3e5e7" fill="none" stroke-width="1"/></svg>
<svg class="a" style="left:25.5px;top:377.500px" width="45" height="75" viewBox="0 0 45 75">
<defs><clipPath id="c25"><rect x="0" y="0" width="45" height="75" rx="2"/></clipPath></defs>
<g clip-path="url(#c25)">
<rect width="45" height="75" fill="#6f7265"/>
<rect x="0" y="0" width="45" height="14" fill="#3f453f"/>
<rect x="0" y="13" width="40" height="32" fill="#777a6c" filter="url(#b1)"/>
<rect x="5" y="20" width="30" height="3" fill="#868a7c" opacity=".6"/><rect x="10" y="30" width="26" height="3" fill="#8a7f70" opacity=".6"/>
<rect x="38.500" y="0" width="7" height="48" fill="#1f2324" filter="url(#b1)"/>
<ellipse cx="5" cy="36" rx="6" ry="13" fill="#36502a" filter="url(#b1)"/>
<ellipse cx="14" cy="45" rx="10" ry="4.500" fill="#3c5229" filter="url(#b1)"/>
<ellipse cx="28" cy="45" rx="10" ry="3" fill="#44502c" filter="url(#b1)"/>
<ellipse cx="4" cy="37" rx="2" ry="3" fill="#a8a890" filter="url(#b1)"/>
<polygon points="0,52 12,48 45,66 45,75 0,75" fill="#6c5c57"/>
<polygon points="0,60 45,75 0,75" fill="#54494a" opacity=".7"/>
<polygon points="2,56 30,68 45,72 45,75 20,75" fill="#8a776c" opacity=".5"/>
<polygon points="12,48.500 45,44 45,66" fill="#8ee8ec"/>
<polygon points="12,48.500 45,44 45,46 14,50.500" fill="#dff5f4" opacity=".9"/>
<ellipse cx="6" cy="51.500" rx="6" ry="2.500" fill="#e6e8e2" filter="url(#b1)"/>
<rect x="0" y="70" width="45" height="5" fill="#3a3f72" opacity="1"/>
<rect x="2.800" y="3" width="9.200" height="9.500" fill="#f4f5f6"/><path d="M5.600 5v5.500l4.300-2.750z" fill="#15181b"/>
<text x="15.500" y="11" font-family="Liberation Sans" font-size="8.500" fill="#eceef0" textLength="34" lengthAdjust="spacingAndGlyphs">pexels-ar</text>
</g>
<rect x="0.6" y="0.6" width="43.8" height="73.8" rx="2" fill="none" stroke="#3c4079" stroke-width="1.2"/>
</svg>
<svg class="a" style="left:71px;top:377.500px" width="45" height="75" viewBox="0 0 45 75">
<defs><clipPath id="c71"><rect x="0" y="0" width="45" height="75" rx="2"/></clipPath></defs>
<g clip-path="url(#c71)">
<rect width="45" height="75" fill="#6f7265"/>
<rect x="0" y="0" width="45" height="14" fill="#3f453f"/>
<rect x="0" y="13" width="40" height="32" fill="#777a6c" filter="url(#b1)"/>
<rect x="5" y="20" width="30" height="3" fill="#868a7c" opacity=".6"/><rect x="10" y="30" width="26" height="3" fill="#8a7f70" opacity=".6"/>
<rect x="38.500" y="0" width="7" height="48" fill="#1f2324" filter="url(#b1)"/>
<ellipse cx="5" cy="36" rx="6" ry="13" fill="#36502a" filter="url(#b1)"/>
<ellipse cx="14" cy="45" rx="10" ry="4.500" fill="#3c5229" filter="url(#b1)"/>
<ellipse cx="28" cy="45" rx="10" ry="3" fill="#44502c" filter="url(#b1)"/>
<ellipse cx="4" cy="37" rx="2" ry="3" fill="#a8a890" filter="url(#b1)"/>
<polygon points="0,52 12,48 45,66 45,75 0,75" fill="#6c5c57"/>
<polygon points="0,60 45,75 0,75" fill="#54494a" opacity=".7"/>
<polygon points="2,56 30,68 45,72 45,75 20,75" fill="#8a776c" opacity=".5"/>
<polygon points="12,48.500 45,44 45,66" fill="#8ee8ec"/>
<polygon points="12,48.500 45,44 45,46 14,50.500" fill="#dff5f4" opacity=".9"/>
<ellipse cx="6" cy="51.500" rx="6" ry="2.500" fill="#e6e8e2" filter="url(#b1)"/>
<rect x="0" y="70" width="45" height="5" fill="" opacity="0"/>
<rect x="2.800" y="3" width="9.200" height="9.500" fill="#f4f5f6"/><path d="M5.600 5v5.500l4.300-2.750z" fill="#15181b"/>
<text x="15.500" y="11" font-family="Liberation Sans" font-size="8.500" fill="#eceef0" textLength="34" lengthAdjust="spacingAndGlyphs">pexels-ar</text>
</g>
<rect x="1.0" y="1.0" width="43" height="73" rx="2" fill="none" stroke="#eceef1" stroke-width="2"/>
</svg>
<!-- playhead -->
<div class="a" style="left:25px;top:333px;width:92px;height:2px;background:#ef5b4c"></div>
<svg class="ic" style="left:108px;top:311px" width="18" height="52" viewBox="0 0 18 52"><path d="M4 1h11v8l-4.500 6.500h-2L4 9z" fill="#f0604f"/><rect x="1" y="25" width="16.500" height="25" rx="8" fill="#f0604f"/><g stroke="#ffe4df" stroke-width=".9" fill="none" opacity=".9"><path d="M5.800 29.500L11.800 41.500M12.700 29.500L6.700 41.500"/><circle cx="5.800" cy="43.300" r="1.700"/><circle cx="12.700" cy="43.300" r="1.700"/></g></svg>
<div class="a" style="left:117px;top:320px;width:2px;height:225px;background:#e8574a"></div>
<!-- ===== dialog ===== -->
<div id="dlg" class="a" style="left:335px;top:120px;width:348px;height:215px;background:#1b222b;border:1px solid #38404a;border-radius:3px;box-shadow:0 0 5px rgba(0,0,0,.55)"></div>
<div class="a" style="left:336px;top:145px;width:346px;height:1px;background:#141a20"></div>
<div class="t n" style="left:344px;top:128px;color:#c8ccd0">Custom Speed</div>
<svg class="ic" style="left:663px;top:128px" width="9" height="9" viewBox="0 0 9 9"><path d="M.8 .8L8.2 8.2M8.2 .8L.8 8.2" stroke="#e8eaec" stroke-width="1.2" fill="none"/></svg>
<!-- speed -->
<div class="t nr" style="left:361px;top:165.700px;width:54px;text-align:right;color:#b9bdc2">Speed:</div>
<div class="a" style="left:427px;top:170px;width:173px;height:1px;background:#4a525b"></div>
<div class="a" style="left:427px;top:169px;width:85px;height:2px;background:#dfe2e5;border-radius:1px"></div>
<div class="a" style="left:509px;top:167px;width:7px;height:7px;border-radius:50%;background:#e4e6e8"></div>
<div class="a" style="left:607px;top:160px;width:40px;height:21px;background:#151b22"></div>
<div class="t" style="left:614px;top:166px;color:#d5d8db">1.00</div>
<div class="t" style="left:652px;top:166px;font-size:8.5px;color:#aeb3b8">X</div>
<!-- duration -->
<div class="t nr" style="left:361px;top:199.700px;width:54px;text-align:right;color:#b9bdc2">Duration:</div>
<div class="a" style="left:426px;top:194px;width:160px;height:23px;background:#151b22"></div>
<div class="t" style="left:433px;top:201px;color:#d5d8db">00:00:03:11</div>
<!-- reverse -->
<div class="t nr" style="left:361px;top:233.500px;width:54px;text-align:right;color:#b9bdc2">Reverse:</div>
<div class="a" style="left:429px;top:234px;width:9px;height:9px;background:#4fd8b7;border-radius:1.5px"></div>
<svg class="ic" style="left:429px;top:234px" width="9" height="9" viewBox="0 0 9 9"><path d="M2 4.6L3.8 6.4L7.2 2.6" stroke="#12333a" stroke-width="1.4" fill="none"/></svg>
<div class="t n" style="left:441px;top:233.500px;color:#f2f3f4">Reverse Speed</div>
<!-- ripple -->
<div class="t nr" style="left:361px;top:262.700px;width:54px;text-align:right;color:#b9bdc2">Ripple:</div>
<div class="a" style="left:429px;top:263px;width:9px;height:9px;border:1px solid #a5aab0;border-radius:1.5px"></div>
<div class="t n" style="left:441px;top:262.700px;color:#a9aeb4">Ripple Edit</div>
<!-- buttons -->
<div class="a" style="left:509px;top:301px;width:75px;height:22.500px;border-radius:12px;background:#4fd8b7"></div>
<div class="t" style="left:509px;top:307px;width:75px;text-align:center;font-family:'Liberation Serif',serif;font-weight:bold;font-size:9.5px;color:#0f2f35">OK</div>
<div class="a" style="left:596px;top:301px;width:75px;height:22.500px;border-radius:12px;border:2px solid #4fd8b7;background:#1a2129"></div>
<div class="t" style="left:596px;top:307px;width:75px;text-align:center;font-weight:bold;font-size:9px;letter-spacing:-.3px;color:#f4f5f6">CANCEL</div>
<!-- cursor -->
<svg class="ic" style="left:472px;top:253px" width="9" height="13" viewBox="0 0 9 13"><path d="M.7 .7V10L3 7.9L4.6 11.6L6 11L4.4 7.4H7.4Z" fill="#fff" stroke="#111" stroke-width=".8"/></svg>
</body></html>
